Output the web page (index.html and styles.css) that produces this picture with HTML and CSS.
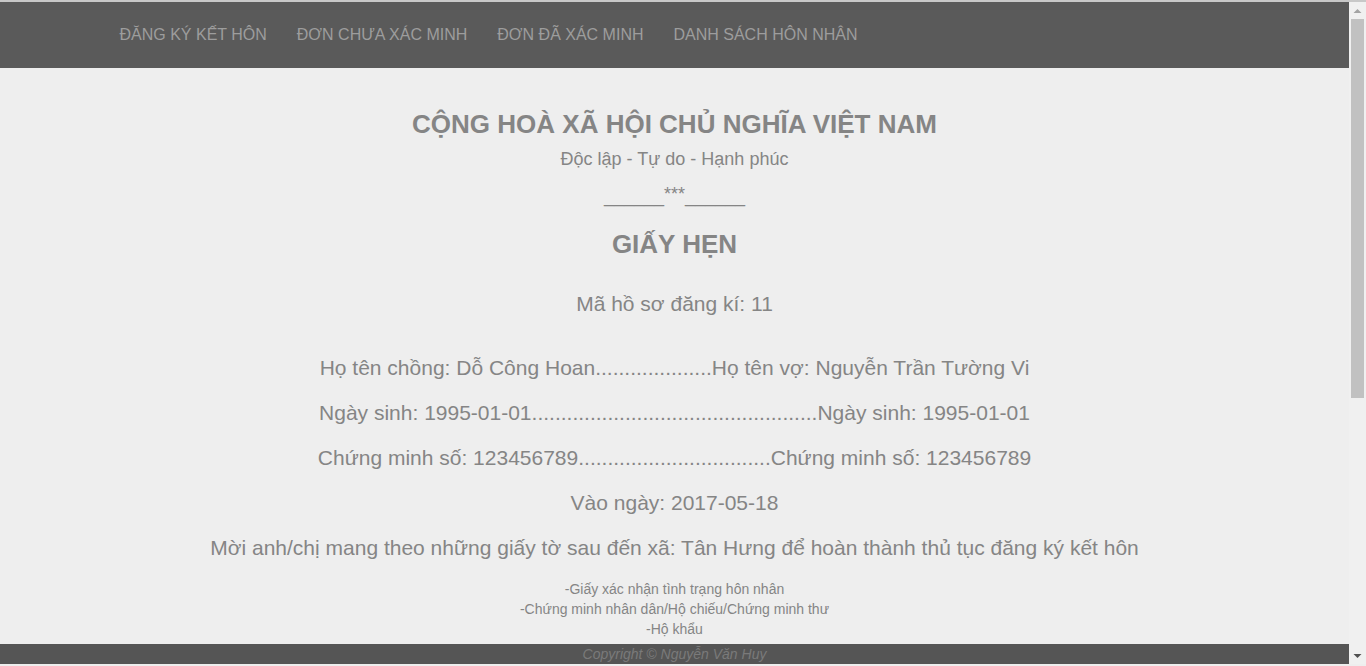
FILE: index.html
```html
<!DOCTYPE html>
<html lang="vi">
<head>
<meta charset="utf-8">
<title>Giấy hẹn</title>
<link rel="stylesheet" href="styles.css">
</head>
<body>
<div class="topline"></div>
<div class="window">
  <div class="page">
    <nav class="navbar">
      <div class="container">
        <ul class="nav">
          <li><a href="#">ĐĂNG KÝ KẾT HÔN</a></li>
          <li><a href="#">ĐƠN CHƯA XÁC MINH</a></li>
          <li><a href="#">ĐƠN ĐÃ XÁC MINH</a></li>
          <li><a href="#">DANH SÁCH HÔN NHÂN</a></li>
        </ul>
      </div>
    </nav>
    <main class="paper">
      <h2 class="title">CỘNG HOÀ XÃ HỘI CHỦ NGHĨA VIỆT NAM</h2>
      <p class="motto">Độc lập - Tự do - Hạnh phúc</p>
      <p class="divider">______<span class="stars">***</span>______</p>
      <h2 class="doc-name">GIẤY HẸN</h2>
      <p class="code">Mã hồ sơ đăng kí: 11</p>
      <div class="rows">
        <p class="row">Họ tên chồng: Dỗ Công Hoan....................Họ tên vợ: Nguyễn Trần Tường Vi</p>
        <p class="row">Ngày sinh: 1995-01-01.................................................Ngày sinh: 1995-01-01</p>
        <p class="row">Chứng minh số: 123456789.................................Chứng minh số: 123456789</p>
        <p class="row">Vào ngày: 2017-05-18</p>
        <p class="row">Mời anh/chị mang theo những giấy tờ sau đến xã: Tân Hưng để hoàn thành thủ tục đăng ký kết hôn</p>
      </div>
      <ul class="docs">
        <li>-Giấy xác nhận tình trạng hôn nhân</li>
        <li>-Chứng minh nhân dân/Hộ chiếu/Chứng minh thư</li>
        <li>-Hộ khẩu</li>
      </ul>
    </main>
    <footer class="footer">Copyright © Nguyễn Văn Huy</footer>
  </div>
  <div class="scrollbar" aria-hidden="true">
    <div class="sb-btn">
      <svg width="17" height="17" viewBox="0 0 17 17"><polygon points="4.5,11 12.5,11 8.5,7" fill="#a3a3a3"/></svg>
    </div>
    <div class="sb-track"><div class="sb-thumb"></div></div>
    <div class="sb-btn">
      <svg width="17" height="17" viewBox="0 0 17 17"><polygon points="4.5,7 12.5,7 8.5,11" fill="#505050"/></svg>
    </div>
  </div>
</div>
</body>
</html>
```

FILE: styles.css
```css
html, body {
  margin: 0;
  padding: 0;
}
body {
  background: #eeeeee;
  font-family: "Liberation Sans", Arial, sans-serif;
  color: #858585;
  overflow: hidden;
}
.topline {
  height: 2px;
  background: #c8c8c8;
}
.window {
  display: flex;
  height: 662px;
  overflow: hidden;
}
.page {
  flex: 1;
  position: relative;
  overflow: hidden;
}
.navbar {
  background: #5a5a5a;
  height: 66px;
}
.container {
  width: 1170px;
  margin: 0 auto;
  padding: 0 15px;
  box-sizing: border-box;
}
.nav {
  list-style: none;
  margin: 0;
  padding: 0;
  display: flex;
}
.nav a {
  display: block;
  padding: 23px 15px;
  line-height: 20px;
  font-size: 16px;
  color: #9d9d9d;
  text-decoration: none;
}
.paper {
  text-align: center;
  padding: 38px 0 40px;
}
.title {
  margin: 0;
  font-size: 26px;
  line-height: 36px;
  font-weight: bold;
  color: #858585;
}
.motto {
  margin: 4px 0 0;
  font-size: 18px;
  line-height: 26px;
}
.divider {
  margin: 10px 0 0;
  font-size: 18px;
  line-height: 28px;
}
.stars {
  position: relative;
  top: -2px;
}
.doc-name {
  margin: 16px 0 0;
  font-size: 26px;
  line-height: 36px;
  font-weight: bold;
}
.code {
  margin: 28px 0 0;
  font-size: 21px;
  line-height: 28px;
}
.rows {
  margin-top: 36px;
}
.row {
  margin: 0 0 17px;
  font-size: 21px;
  line-height: 28px;
}
.docs {
  list-style: none;
  margin: 0;
  padding: 0;
  font-size: 14px;
  line-height: 20px;
}
.footer {
  position: absolute;
  left: 0;
  right: 0;
  bottom: 0;
  height: 20px;
  line-height: 20px;
  background: #555555;
  color: #7a7a7a;
  font-style: italic;
  font-size: 14px;
  text-align: center;
}
.scrollbar {
  width: 17px;
  flex: none;
  display: flex;
  flex-direction: column;
  background: #f0f0f0;
}
.sb-btn {
  height: 17px;
  flex: none;
}
.sb-btn svg {
  display: block;
}
.sb-track {
  flex: 1;
  padding: 0 2px;
}
.sb-thumb {
  height: 379px;
  background: #c1c1c1;
}
```
